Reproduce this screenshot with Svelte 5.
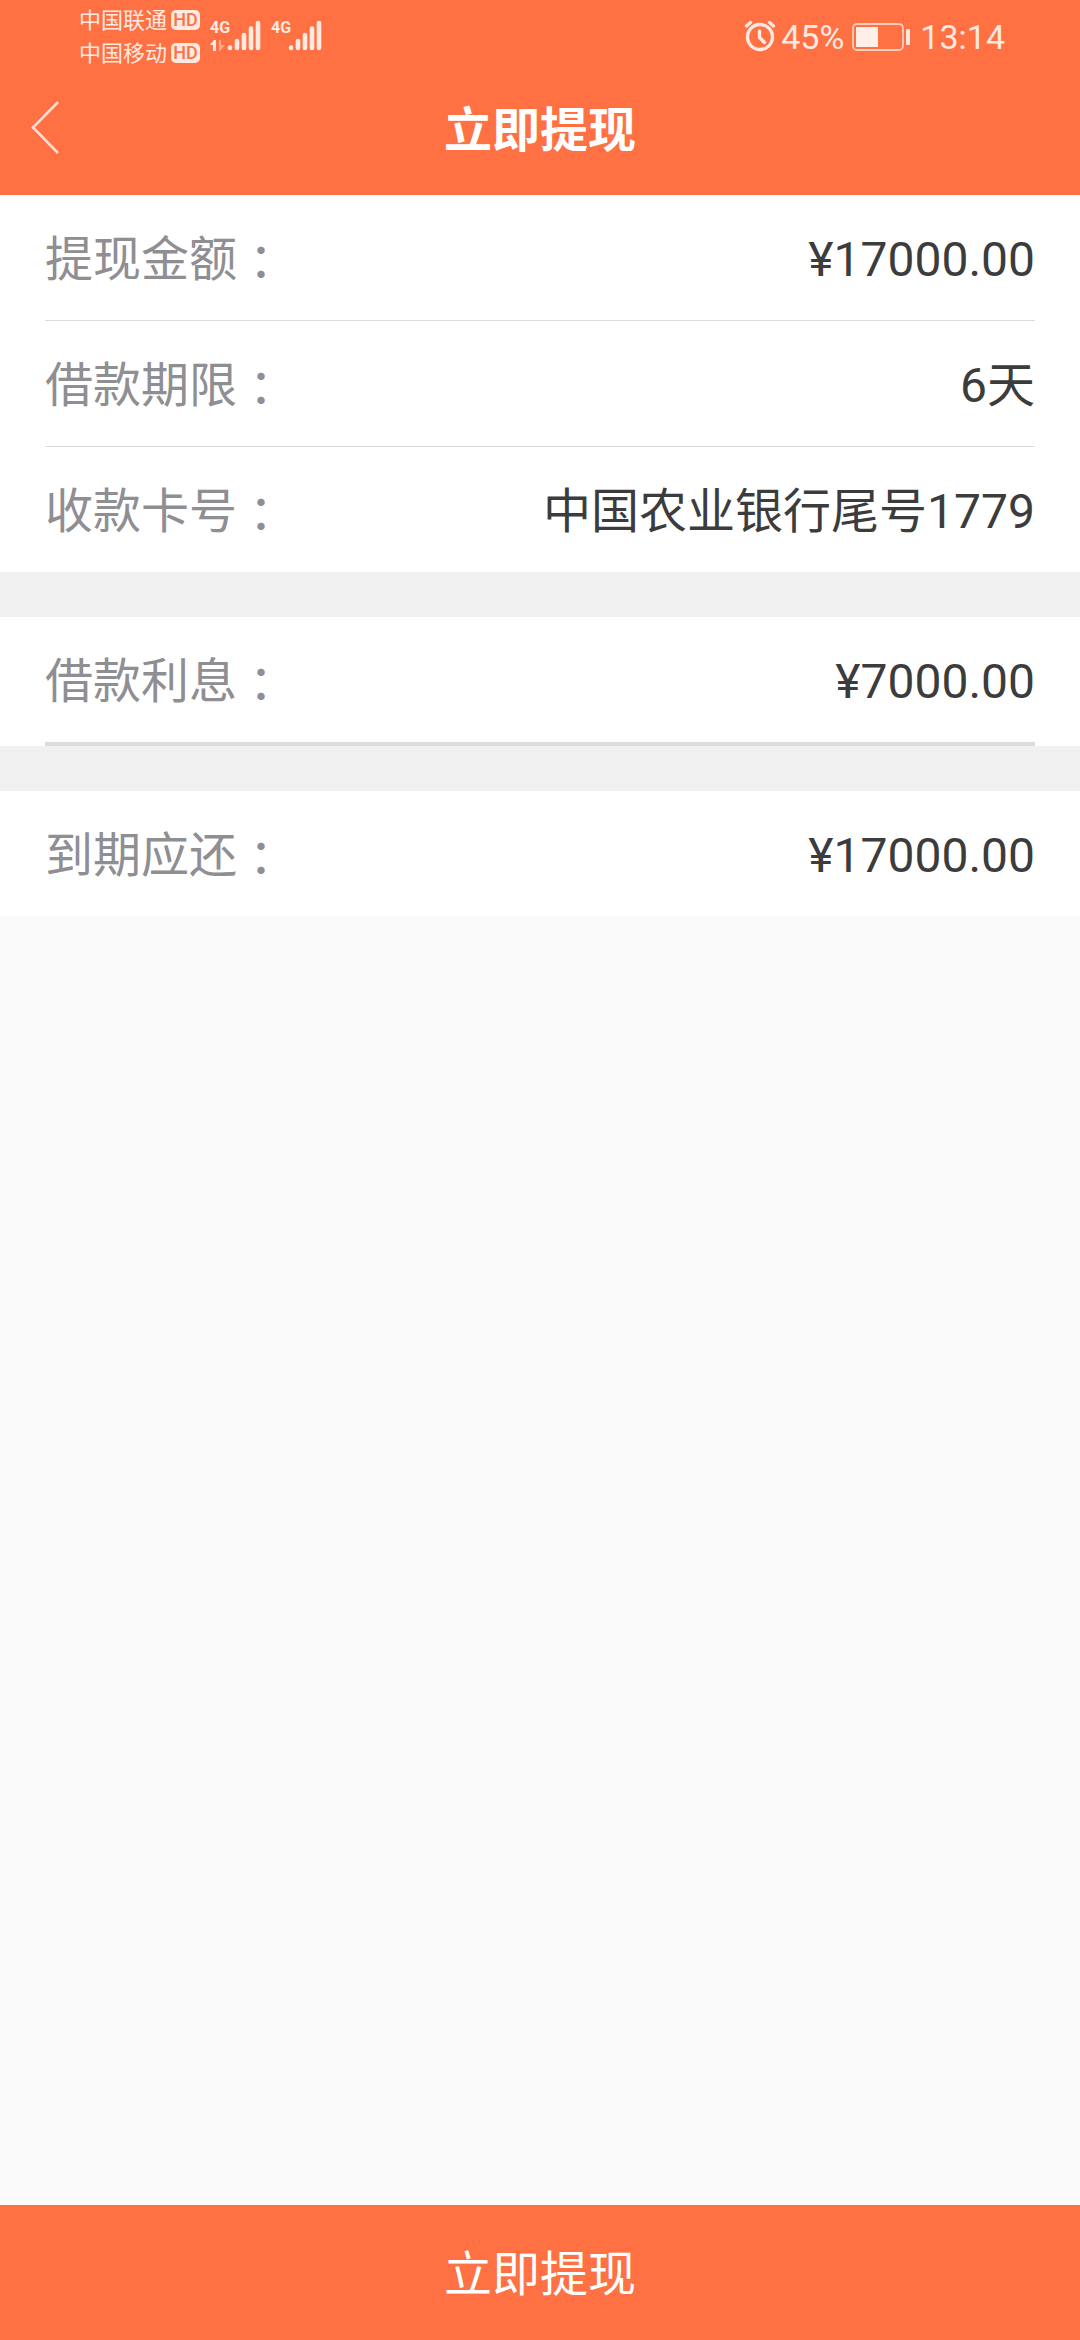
<script>
    export let groups = [
        [
            { label: "提现金额", value: "¥17000.00" },
            { label: "借款期限", value: "6天" },
            { label: "收款卡号", value: "中国农业银行尾号1779" }
        ],
        [{ label: "借款利息", value: "¥7000.00", underline: true }],
        [{ label: "到期应还", value: "¥17000.00" }]
    ];

    const carriers = ["中国联通", "中国移动"];

    function goBack() {
        history.back();
    }
</script>

<div class="page">
    <header>
        <div class="status">
            <div class="carriers">
                {#each carriers as carrier}
                    <div class="carrier">
                        <span>{carrier}</span>
                        <span class="hd">HD</span>
                    </div>
                {/each}
            </div>

            {#each [true, false] as active}
                <div class="signal">
                    <div class="network">
                        <span>4G</span>
                        {#if active}
                            <svg width="16" height="12" viewBox="0 0 16 12">
                                <path d="M0 6 L4 1 H6 V12 H3 V6 Z" fill="#ffe9e1" />
                                <path d="M9 1 H11 V6 H15 L10 12 H9 Z" fill="#ffa88c" />
                            </svg>
                        {/if}
                    </div>
                    <svg width="34" height="32" viewBox="0 0 34 32" stroke="#ffe9e1" stroke-width="4.6" stroke-linecap="round">
                        <path d="M3 28.5V29M10 22V29M17 16V29M24 9.5V29M31 4V29" />
                    </svg>
                </div>
            {/each}

            <div class="right">
                <svg width="32" height="34" viewBox="0 2 32 34" fill="none" stroke="#ffe9e1" stroke-width="3.4" stroke-linecap="round">
                    <circle cx="16" cy="19" r="12.5" />
                    <path d="M2.5 8 L6.5 4.5 M25.5 4.5 L29.5 8" />
                    <path d="M15.5 13V19.5L20.5 24.5" />
                </svg>
                <span class="percent">45%</span>
                <svg class="battery" width="60" height="28" viewBox="0 0 60 28">
                    <rect x="1" y="1" width="50" height="26" rx="4" fill="none" stroke="#ffcdbb" stroke-width="1.8" />
                    <rect x="4" y="4" width="22" height="20" fill="#ffefe9" />
                    <rect x="54" y="6" width="4" height="16" rx="1" fill="#ffe9e1" />
                </svg>
                <span>13:14</span>
            </div>
        </div>

        <nav>
            <button class="back" aria-label="返回" on:click={goBack}>
                <svg width="30" height="56" viewBox="0 0 30 56" fill="none" stroke="#ffdccf" stroke-width="2.6">
                    <path d="M28 2 L3 27.5 L28 53" />
                </svg>
            </button>
            <h1>立即提现</h1>
        </nav>
    </header>

    <main>
        {#each groups as rows}
            <dl>
                {#each rows as row}
                    <div class="row" class:underline={row.underline}>
                        <dt>{row.label}<span lang="zh-Hant">：</span></dt>
                        <dd>{row.value}</dd>
                    </div>
                {/each}
            </dl>
        {/each}
    </main>

    <button class="submit">立即提现</button>
</div>

<style>
    :global(body) {
        margin: 0;
        background-color: #fafafa;
    }

    .page {
        display: flex;
        flex-direction: column;
        min-height: 100vh;
        font-family: Roboto, "Noto Sans CJK SC", sans-serif;
        font-size: 48px;
        line-height: 60px;
    }

    header {
        padding-bottom: 12px;
        background-color: #ff7043;
        color: #fff;
    }

    .status {
        display: flex;
        align-items: center;
        height: 73px;
        padding: 0 75px 0 79px;
        color: #ffe9e1;
    }

    .carriers {
        margin-right: 10px;
        font-size: 22px;
        line-height: 33px;
    }

    .carrier {
        display: flex;
        align-items: center;
        gap: 4px;
    }

    .hd {
        width: 29px;
        border-radius: 5px;
        background-color: #ffe9e1;
        color: #ff7043;
        font-size: 18px;
        font-weight: 500;
        line-height: 20px;
        text-align: center;
    }

    .signal {
        display: flex;
        margin: 0 10px 4px 0;
    }

    .network {
        display: flex;
        flex-direction: column;
        justify-content: space-between;
        width: 17px;
        font-family: "Liberation Sans Narrow", Roboto, sans-serif;
        font-size: 16px;
        font-weight: bold;
        line-height: 18px;
    }

    .right {
        display: flex;
        align-items: center;
        margin-left: auto;
        font-size: 34px;
        line-height: 40px;
    }

    .percent {
        margin-left: 5px;
    }

    .battery {
        margin: 0 8px;
    }

    nav {
        display: grid;
        grid-template-columns: 1fr auto 1fr;
        align-items: center;
        height: 110px;
    }

    h1 {
        margin: 0;
        padding-top: 6px;
        font-size: 48px;
        font-weight: bold;
    }

    .back {
        justify-self: start;
        display: flex;
        padding: 0 30px;
        border: none;
        background-color: transparent;
        cursor: pointer;
    }

    main {
        flex: 1;
    }

    dl {
        margin: 0;
        padding: 0 45px;
        background-color: #fff;
    }

    dl + dl {
        border-top: 45px solid #f0f0f0;
    }

    .row {
        display: flex;
        align-items: center;
        justify-content: space-between;
        height: 121px;
        padding-top: 4px;
    }

    .row + .row {
        border-top: 1px solid #dcdcdc;
    }

    .underline {
        border-bottom: 4px solid #dcdcdc;
    }

    dt {
        color: #8e8e93;
    }

    /* the centred colon hangs a little below the label */
    dt span {
        font-family: "Noto Sans CJK TC", sans-serif;
        line-height: 48px;
        vertical-align: -4px;
    }

    dd {
        margin: 0;
        color: #3c3c3c;
    }

    .submit {
        height: 135px;
        padding: 4px 0 0;
        border: none;
        background-color: #ff7043;
        color: #fff;
        font: inherit;
        cursor: pointer;
    }
</style>
